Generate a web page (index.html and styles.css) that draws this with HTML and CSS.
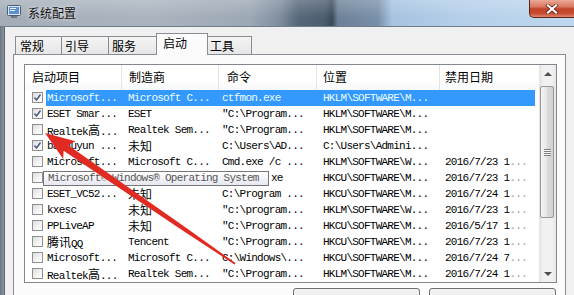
FILE: index.html
```html
<!DOCTYPE html>
<html lang="zh-CN">
<head>
	<meta charset="UTF-8">
	<title>系统配置</title>
	<link rel="stylesheet" href="styles.css">
</head>
<body>
	<div id="window">
		<div id="titlebar">
			<svg class="title-icon" width="14" height="14" viewBox="0 0 14 14">
				<rect x="0.5" y="0.5" width="13" height="10" rx="1" fill="#dfe8f2" stroke="#4a5a70"/>
				<rect x="2" y="2" width="10" height="7" fill="#5b8fd0"/>
				<rect x="3" y="3" width="6" height="1" fill="#e8f2ff"/>
				<rect x="3" y="5" width="5" height="1" fill="#e8f2ff"/>
				<rect x="4" y="11" width="6" height="2" fill="#6c7888"/>
			</svg>
			<span class="title-text">系统配置</span>
			<div id="close">
				<svg width="14" height="10" viewBox="0 0 14 10">
					<path d="M3 1.5 L11 8.5 M11 1.5 L3 8.5" stroke="#5a1c10" stroke-width="3.6" stroke-linecap="square"/>
					<path d="M3 1.5 L11 8.5 M11 1.5 L3 8.5" stroke="#fff" stroke-width="2.2" stroke-linecap="square"/>
				</svg>
			</div>
		</div>
		<div id="frame">
			<div class="frame-left"></div>
			<div id="client">
				<div id="tabs">
					<div class="tab t1">常规</div>
					<div class="tab t2">引导</div>
					<div class="tab t3">服务</div>
					<div class="tab on">启动</div>
					<div class="tab t5">工具</div>
				</div>
				<div id="panel">
					<div class="lv">
						<div class="lv-main">
							<div class="lv-head">
								<div class="hd h1">启动项目</div>
								<div class="hd h2">制造商</div>
								<div class="hd h3">命令</div>
								<div class="hd h4">位置</div>
								<div class="hd h5">禁用日期</div>
							</div>

							<div class="row sel">
								<div class="chkc"><span class="chk"><svg width="9" height="9" viewBox="0 0 9 9"><path d="M1.5 4.5 L3.5 7 L7.5 1.5" fill="none" stroke="#4c5f86" stroke-width="1.6"/></svg></span></div>
								<div class="cells"><span class="c1">Microsoft...</span><span class="c2">Microsoft C...</span><span class="c3">ctfmon.exe</span><span class="c4">HKLM\SOFTWARE\M...</span><span class="c5"></span></div>
							</div>
							<div class="row">
								<div class="chkc"><span class="chk"><svg width="9" height="9" viewBox="0 0 9 9"><path d="M1.5 4.5 L3.5 7 L7.5 1.5" fill="none" stroke="#4c5f86" stroke-width="1.6"/></svg></span></div>
								<div class="cells"><span class="c1">ESET Smar...</span><span class="c2">ESET</span><span class="c3">"C:\Program...</span><span class="c4">HKLM\SOFTWARE\M...</span><span class="c5"></span></div>
							</div>
							<div class="row">
								<div class="chkc"><span class="chk"></span></div>
								<div class="cells"><span class="c1">Realtek<span class="cj">高</span>...</span><span class="c2">Realtek Sem...</span><span class="c3">"C:\Program...</span><span class="c4">HKLM\SOFTWARE\M...</span><span class="c5"></span></div>
							</div>
							<div class="row">
								<div class="chkc"><span class="chk"><svg width="9" height="9" viewBox="0 0 9 9"><path d="M1.5 4.5 L3.5 7 L7.5 1.5" fill="none" stroke="#4c5f86" stroke-width="1.6"/></svg></span></div>
								<div class="cells"><span class="c1">baiduyun ...</span><span class="c2"><span class="cj">未知</span></span><span class="c3">C:\Users\AD...</span><span class="c4">C:\Users\Admini...</span><span class="c5"></span></div>
							</div>
							<div class="row">
								<div class="chkc"><span class="chk"></span></div>
								<div class="cells"><span class="c1">Microsoft...</span><span class="c2">Microsoft C...</span><span class="c3">Cmd.exe /c ...</span><span class="c4">HKLM\SOFTWARE\W...</span><span class="c5">2016/7/23 1<span class="fade">...</span></span></div>
							</div>
							<div class="row">
								<div class="chkc"><span class="chk"></span></div>
								<div class="cells"><span class="c1"></span><span class="c2"></span><span class="c3 under">xe</span><span class="c4">HKCU\SOFTWARE\M...</span><span class="c5">2016/7/23 1<span class="fade">...</span></span></div>
							</div>
							<div class="row">
								<div class="chkc"><span class="chk"></span></div>
								<div class="cells"><span class="c1">ESET_VC52...</span><span class="c2"><span class="cj">未知</span></span><span class="c3">C:\Program ...</span><span class="c4">HKCU\SOFTWARE\M...</span><span class="c5">2016/7/24 1<span class="fade">...</span></span></div>
							</div>
							<div class="row">
								<div class="chkc"><span class="chk"></span></div>
								<div class="cells"><span class="c1">kxesc</span><span class="c2"><span class="cj">未知</span></span><span class="c3">"c:\program...</span><span class="c4">HKLM\SOFTWARE\W...</span><span class="c5">2016/7/23 1<span class="fade">...</span></span></div>
							</div>
							<div class="row">
								<div class="chkc"><span class="chk"></span></div>
								<div class="cells"><span class="c1">PPLiveAP</span><span class="c2"><span class="cj">未知</span></span><span class="c3">"C:\Program...</span><span class="c4">HKCU\SOFTWARE\M...</span><span class="c5">2016/5/17 1<span class="fade">...</span></span></div>
							</div>
							<div class="row">
								<div class="chkc"><span class="chk"></span></div>
								<div class="cells"><span class="c1"><span class="cj">腾讯</span>QQ</span><span class="c2">Tencent</span><span class="c3">"C:\Program...</span><span class="c4">HKCU\SOFTWARE\M...</span><span class="c5">2016/7/23 1<span class="fade">...</span></span></div>
							</div>
							<div class="row">
								<div class="chkc"><span class="chk"></span></div>
								<div class="cells"><span class="c1">Microsoft...</span><span class="c2">Microsoft C...</span><span class="c3">C:\Windows\...</span><span class="c4">HKCU\SOFTWARE\M...</span><span class="c5">2016/7/24 7<span class="fade">...</span></span></div>
							</div>
							<div class="row">
								<div class="chkc"><span class="chk"></span></div>
								<div class="cells"><span class="c1">Realtek<span class="cj">高</span>...</span><span class="c2">Realtek Sem...</span><span class="c3">"C:\Program...</span><span class="c4">HKLM\SOFTWARE\M...</span><span class="c5">2016/7/24 1<span class="fade">...</span></span></div>
							</div>
						</div>
						<div class="sb">
							<div class="sb-btn"><span class="arr-up"></span></div>
							<div class="thumb"><span class="grip"></span></div>
							<div class="sb-btn sb-down"><span class="arr-down"></span></div>
						</div>
					</div>
					<div class="btns">
						<div class="btn"></div>
						<div class="btn"></div>
					</div>
				</div>
			</div>
		</div>

		<div class="tip">Microsoft® Windows® Operating System</div>

		<svg class="mark" width="574" height="295" viewBox="0 0 574 295">
			<polygon points="45,133 75.5,141.2 68.3,145.2 187.1,228.6 235.5,263.1 234.5,264.5 184.9,231.9 63.6,150.8 63.2,159" fill="#e12a22"/>
		</svg>
	</div>
</body>
</html>
```

FILE: styles.css
```css
*{
	margin: 0;
	padding: 0;
	box-sizing: border-box;
}
body{
	width: 574px;
	height: 295px;
	overflow: hidden;
	background: #f0f0f0;
	font-family: "Noto Sans CJK SC", sans-serif;
	font-size: 12px;
	color: #000;
}
#window{
	position: relative;
	width: 574px;
	height: 295px;
	overflow: hidden;
}

/* title bar */
#titlebar{
	display: flex;
	align-items: flex-start;
	height: 27px;
	border-bottom: 1px solid #6f7d8b;
	background:
		linear-gradient(180deg, rgba(255,255,255,.2), rgba(255,255,255,0) 70%),
		linear-gradient(90deg, #a3adb8 0, #aab4bf 150px, #9ca8b5 250px, #7e8d9d 280px, #56677a 298px, #4b5c6e 325px, #3a4a5a 332px, #6c8198 338px, #7a90a8 378px, #a6c3e0 392px, #b6d0ea 470px, #bed7ee 100%);
}
.title-icon{
	margin: 5px 0 0 7px;
}
.title-text{
	margin: 4px 0 0 7px;
	line-height: 18px;
	color: #111;
	text-shadow: 0 0 5px rgba(255,255,255,.9);
}
#close{
	margin-left: auto;
	width: 45px;
	height: 18px;
	border: 1px solid #5d2418;
	border-top: none;
	border-right: none;
	border-radius: 0 0 0 5px;
	background: linear-gradient(180deg, #eaa996 0, #d97761 40%, #c2432b 52%, #c64a30 78%, #e08770 100%);
	display: flex;
	align-items: center;
	justify-content: center;
}

/* frame + client */
#frame{
	display: flex;
	height: 268px;
}
.frame-left{
	width: 5px;
	background: linear-gradient(90deg, #6c7681, #8a949e);
	border-right: 1px solid #5b6570;
}
#client{
	flex: 1;
	padding: 9px 0 0 8px;
	background: #f0f0f0;
}

/* tabs */
#tabs{
	display: flex;
	align-items: flex-end;
	height: 18px;
	padding-left: 2px;
}
.tab{
	height: 18px;
	border: 1px solid #898c95;
	border-bottom: none;
	background: linear-gradient(180deg, #f4f4f4, #e6e6e6);
	padding-left: 4px;
	line-height: 17px;
	color: #000;
}
.t1{
	width: 47px;
}
.t2{
	width: 48px;
	margin-left: -1px;
	padding-left: 3px;
}
.t3{
	width: 50px;
	margin-left: -1px;
	padding-left: 3px;
}
.tab.on{
	position: relative;
	z-index: 1;
	width: 52px;
	height: 22px;
	margin: 0 -2px -1px -2px;
	padding-left: 6px;
	background: #fbfbfb;
}
.t5{
	width: 46px;
	padding-left: 3px;
}

#panel{
	width: 553px;
	height: 260px;
	border: 1px solid #898c95;
	background: #fbfbfb;
	padding: 9px 8px 0 10px;
}

/* list view */
.lv{
	display: flex;
	width: 533px;
	height: 219px;
	border: 1px solid #828790;
	background: #fff;
}
.lv-main{
	width: 514px;
}
.lv-head{
	display: flex;
	height: 25px;
}
.hd{
	height: 25px;
	line-height: 23px;
	border-right: 1px solid #e5e5e5;
	background: linear-gradient(180deg, #fff, #fff 60%, #f7f8fa);
	white-space: nowrap;
}
.h1{
	width: 97px;
	padding-left: 7px;
}
.h2{
	width: 97px;
	padding-left: 7px;
}
.h3{
	width: 98px;
	padding-left: 8px;
}
.h4{
	width: 123px;
	padding-left: 6px;
}
.h5{
	width: 99px;
	padding-left: 5px;
	border-right: none;
}

.row{
	display: flex;
	height: 16px;
}
.chkc{
	width: 21px;
	padding: 2px 0 0 7px;
}
.chk{
	display: block;
	width: 11px;
	height: 11px;
	border: 1px solid #8f8f8f;
	background: linear-gradient(135deg, #dcdcdc, #f4f4f4 60%, #fff);
	padding: 0;
}
.chk svg{
	display: block;
}
.cells{
	display: flex;
	width: 489px;
	height: 16px;
	line-height: 16px;
	font-family: "Liberation Mono", "Noto Sans CJK SC", monospace;
	font-size: 11px;
	letter-spacing: -0.75px;
	white-space: nowrap;
	color: #000;
}
.row.sel .cells{
	background: #3399ff;
	color: #eafcff;
}
.cells span{
	overflow: hidden;
}
.cj{
	font-family: "Noto Sans CJK SC", sans-serif;
	font-size: 12px;
	letter-spacing: 0;
}
.fade{
	color: #9a9a9a;
}
.c1{
	width: 76px;
	padding-left: 1px;
}
.c2{
	width: 97px;
	padding-left: 6px;
}
.c3{
	width: 98px;
	padding-left: 3px;
}
.c3.under{
	padding-left: 52px;
}
.c4{
	width: 123px;
	padding-left: 6px;
}
.c5{
	width: 95px;
	padding-left: 5px;
}

/* scrollbar */
.sb{
	width: 17px;
	display: flex;
	flex-direction: column;
	background: linear-gradient(90deg, #e2e2e2, #f1f1f1 25%, #f1f1f1 75%, #e6e6e6);
}
.sb-btn{
	height: 17px;
	display: flex;
	align-items: center;
	justify-content: center;
}
.sb-down{
	margin-top: auto;
}
.arr-up{
	width: 0;
	height: 0;
	border-left: 4px solid transparent;
	border-right: 4px solid transparent;
	border-bottom: 4px solid #4e4e4e;
}
.arr-down{
	width: 0;
	height: 0;
	border-left: 4px solid transparent;
	border-right: 4px solid transparent;
	border-top: 4px solid #4e4e4e;
}
.thumb{
	width: 14px;
	height: 132px;
	margin: 4px 0 0 1px;
	border: 1px solid #989898;
	border-radius: 2px;
	background: linear-gradient(90deg, #f4f4f4, #e8e8e8 45%, #d9d9d9 55%, #d2d2d2);
	display: flex;
	align-items: center;
	justify-content: center;
}
.grip{
	width: 7px;
	height: 7px;
	background: repeating-linear-gradient(180deg, #808080 0 1px, #f4f4f4 1px 2px);
}

/* buttons */
.btns{
	display: flex;
	justify-content: flex-end;
	gap: 9px;
	margin-top: 5px;
	padding-right: 1px;
}
.btn{
	width: 127px;
	height: 23px;
	border: 1px solid #707070;
	border-radius: 3px;
	background: linear-gradient(180deg, #f2f2f2, #ebebeb 45%, #dddddd 50%, #cfcfcf);
}

/* overlays */
.tip{
	position: absolute;
	left: 43px;
	top: 171px;
	width: 226px;
	height: 15px;
	border: 1px solid #767676;
	background: linear-gradient(180deg, #ffffff, #e6e7f0);
	padding-left: 4px;
	font-family: "Liberation Mono", monospace;
	font-size: 11px;
	letter-spacing: -0.75px;
	line-height: 13px;
	color: #575757;
	white-space: nowrap;
}
.mark{
	position: absolute;
	left: 0;
	top: 0;
	pointer-events: none;
}
```
